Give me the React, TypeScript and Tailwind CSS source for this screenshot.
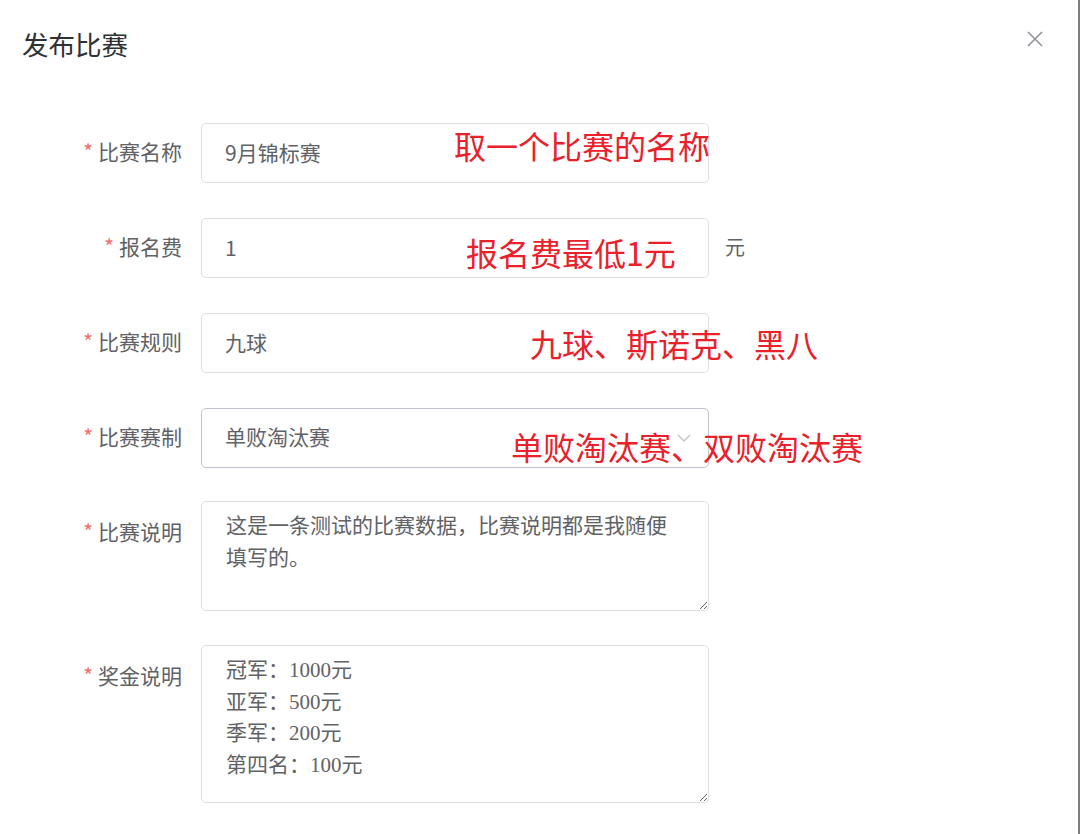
import React from "react";

const sans = { fontFamily: '"Noto Sans CJK SC", "Noto Sans", sans-serif' };
const serif = { fontFamily: '"Liberation Serif", "Noto Sans CJK SC", serif' };

const Label = ({ text, tall }: { text: string; tall?: boolean }) => (
  <div
    className={`w-[201px] shrink-0 pr-[19px] text-right text-[21px] text-[#606266] ${
      tall ? "leading-[61px]" : "leading-[57px]"
    }`}
  >
    <span className="mr-[5px] text-[#f56c6c]">*</span>
    {text}
  </div>
);

const TextInput = ({ value }: { value: string }) => (
  <input
    readOnly
    value={value}
    style={sans}
    className="h-[60px] w-[508px] rounded-[5px] border border-[#dcdfe6] bg-white px-[23px] pb-[3px] text-[21px] text-[#606266] outline-none"
  />
);

const Note = ({ text, className }: { text: string; className: string }) => (
  <div
    style={sans}
    className={`pointer-events-none absolute whitespace-nowrap text-[32px] leading-[32px] text-[#e8212b] ${className}`}
  >
    {text}
  </div>
);

export default function App() {
  return (
    <div
      style={sans}
      className="relative h-[834px] w-[1080px] overflow-hidden border-r-2 border-[#7f7f7f] bg-white"
    >
      {/* header */}
      <div className="flex h-[88px] items-start justify-between pl-[22px] pr-[34px] pt-[28px]">
        <div className="text-[26.5px] leading-[32px] text-[#303133]">发布比赛</div>
        <svg width="18" height="18" viewBox="0 0 18 18" className="mt-[2px]">
          <path d="M2 2 L16 16 M16 2 L2 16" stroke="#909399" strokeWidth="1.6" />
        </svg>
      </div>

      {/* form */}
      <div className="mt-[35px] flex flex-col">
        <div className="flex items-start">
          <Label text="比赛名称" />
          <TextInput value="9月锦标赛" />
        </div>

        <div className="mt-[35px] flex items-start">
          <Label text="报名费" />
          <TextInput value="1" />
          <span className="ml-[16px] text-[20px] leading-[57px] text-[#606266]">元</span>
        </div>

        <div className="mt-[35px] flex items-start">
          <Label text="比赛规则" />
          <TextInput value="九球" />
        </div>

        <div className="mt-[35px] flex items-start">
          <Label text="比赛赛制" />
          <div className="flex h-[60px] w-[508px] items-center justify-between rounded-[5px] border border-[#c0c4cc] bg-white pb-[3px] pl-[23px] pr-[16px] text-[21px] text-[#606266]">
            <span>单败淘汰赛</span>
            <svg width="16" height="16" viewBox="0 0 16 16" className="mt-[3px]">
              <path d="M2 5 L8 11 L14 5" fill="none" stroke="#c0c4cc" strokeWidth="1.5" />
            </svg>
          </div>
        </div>

        <div className="mt-[33px] flex items-start">
          <Label text="比赛说明" tall />
          <textarea
            readOnly
            style={serif}
            className="h-[110px] w-[508px] rounded-[5px] border border-[#dcdfe6] bg-white px-[24px] py-[9px] text-[21px] leading-[31.5px] text-[#606266] outline-none"
            value="这是一条测试的比赛数据，比赛说明都是我随便填写的。"
          />
        </div>

        <div className="mt-[34px] flex items-start">
          <Label text="奖金说明" tall />
          <textarea
            readOnly
            style={serif}
            className="h-[158px] w-[508px] rounded-[5px] border border-[#dcdfe6] bg-white px-[24px] py-[9px] text-[21px] leading-[31.5px] text-[#606266] outline-none"
            value={"冠军：1000元\n亚军：500元\n季军：200元\n第四名：100元"}
          />
        </div>
      </div>

      {/* red annotations */}
      <Note text="取一个比赛的名称" className="left-[454px] top-[129px]" />
      <Note text="报名费最低1元" className="left-[466px] top-[236px]" />
      <Note text="九球、斯诺克、黑八" className="left-[530px] top-[327px]" />
      <Note text="单败淘汰赛、双败淘汰赛" className="left-[511px] top-[430px]" />
    </div>
  );
}
